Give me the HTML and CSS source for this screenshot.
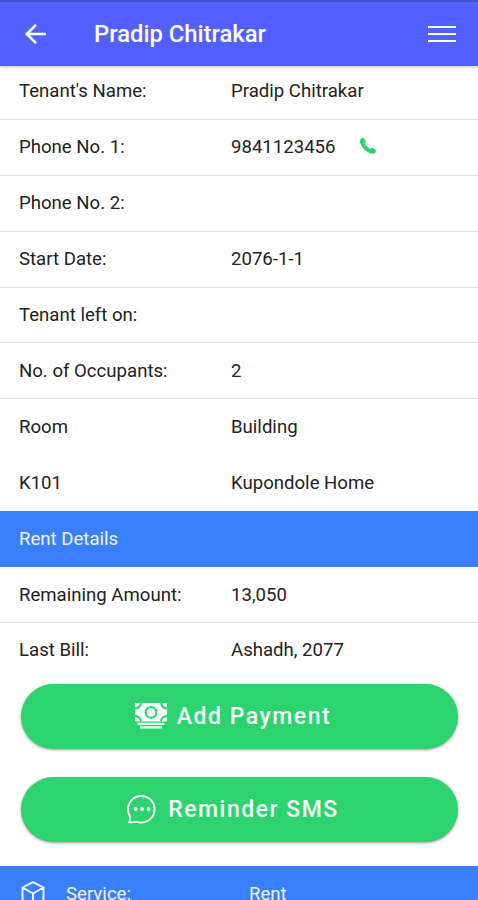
FILE: index.html
```html
<!DOCTYPE html>
<html lang="en">

<head>
    <meta charset="UTF-8">
    <meta name="viewport" content="width=device-width, initial-scale=1.0">
    <title>Tenant Details</title>
    <link rel="stylesheet" href="styles.css">
</head>

<body>

    <div class="header">
        <svg class="back" viewBox="0 0 24 24">
            <path d="M22 12H3M12 2.8L2.8 12l9.2 9.2" />
        </svg>
        <h1>Pradip Chitrakar</h1>
        <div class="menu">
            <span></span>
            <span></span>
            <span></span>
        </div>
    </div>

    <!-- tenant info -->
    <ul class="list first">
        <li><span class="label">Tenant's Name:</span><span>Pradip Chitrakar</span></li>
        <li>
            <span class="label">Phone No. 1:</span><span>9841123456</span>
            <svg class="phone" viewBox="0 0 18 18">
                <path d="M1.6 2.1C2.6.9 4.2.3 4.9 1.3L6.6 4.1C7.1 5.1 6.1 5.8 5.7 6.6C6.8 9 8.7 10.7 11 11.7C12 11.1 12.7 10.4 13.7 11L16.4 12.7C17.5 13.5 16.9 14.9 15.6 16C14.7 16.8 13.1 17 11.3 16.3C6.7 14.5 3 10.6 1.3 6.3C.7 4.6.7 3.2 1.6 2.1z" />
            </svg>
        </li>
        <li><span class="label">Phone No. 2:</span></li>
        <li><span class="label">Start Date:</span><span>2076-1-1</span></li>
        <li><span class="label">Tenant left on:</span></li>
        <li><span class="label">No. of Occupants:</span><span>2</span></li>
        <li class="noline"><span class="label">Room</span><span>Building</span></li>
        <li class="noline"><span class="label">K101</span><span>Kupondole Home</span></li>
    </ul>

    <!-- rent -->
    <div class="bar">Rent Details</div>
    <ul class="list">
        <li><span class="label">Remaining Amount:</span><span>13,050</span></li>
        <li class="noline"><span class="label">Last Bill:</span><span>Ashadh, 2077</span></li>
    </ul>

    <div class="buttons">
        <button class="btn" type="button">
            <svg class="cash" viewBox="0 0 32 26">
                <rect class="fill" width="32" height="18.5" rx="1" />
                <path class="cut" d="M0 5.4Q5.2 5 6 0M32 5.4Q26.800 5 26 0M0 13.1Q5.200 13.500 6 18.500M32 13.1Q26.800 13.500 26 18.500" />
                <circle class="cut" cx="16" cy="9.3" r="5.4" />
                <path class="line" d="M2.5 20.800h27M5 24.300h22" />
            </svg>
            <span>Add Payment</span>
        </button>
        <button class="btn" type="button">
            <svg class="chat" viewBox="0 0 30 30">
                <path d="M2.2 28.2C3.6 25.8 3.3 23.8 2.5 21.5A13.3 13.3 0 1 1 9.5 27.7C7 28.7 4.8 28.5 2.2 28.2z" />
                <circle cx="8.6" cy="15" r="1.9" />
                <circle cx="15" cy="15" r="1.9" />
                <circle cx="21.4" cy="15" r="1.9" />
            </svg>
            <span>Reminder SMS</span>
        </button>
    </div>

    <div class="bar service">
        <svg class="cube" viewBox="0 0 24 26">
            <path d="M12 1.2L22.5 6.5V19L12 24.8L1.5 19V6.5zM1.5 6.5L12 12.5L22.5 6.5M12 12.5V24.8" />
        </svg>
        <span class="service-label">Service:</span>
        <span>Rent</span>
    </div>

</body>

</html>
```
FILE: styles.css
```css
* {
    margin: 0;
    padding: 0;
    box-sizing: border-box;
}

body {
    height: 900px;
    overflow: hidden;
    background: #fff;
    color: #222;
    font-family: Roboto, sans-serif;
    font-size: 18.6px;
}

ul {
    list-style: none;
}

svg {
    display: block;
    fill: none;
    flex-shrink: 0;
}

.header {
    position: relative;
    display: flex;
    align-items: center;
    height: 66px;
    padding: 0 22px 0 24px;
    border-top: 2px solid #474fcd;
    background: #5260ff;
    color: #fff;
    box-shadow: 0 1px 3px rgba(0, 0, 0, .25);
}

.header h1 {
    flex: 1;
    margin-left: 46px;
    font-size: 23.8px;
    font-weight: 500;
    line-height: 28px;
}

.back {
    width: 24px;
    height: 24px;
    stroke: #fff;
    stroke-width: 2.6;
}

.menu {
    display: flex;
    flex-direction: column;
    gap: 4.5px;
    width: 28px;
}

.menu span {
    height: 2.5px;
    background: #fff;
}

.list li {
    display: flex;
    align-items: center;
    height: 55.9px;
    padding-left: 19px;
    border-bottom: 1px solid #dedede;
}

.list .noline {
    border-bottom-color: transparent;
}

.list.first {
    margin-top: -2px;
}

.label {
    width: 212px;
}

.phone {
    width: 18px;
    height: 18px;
    margin: -3px 0 0 23px;
    fill: #2dd36f;
}

.bar {
    display: flex;
    align-items: center;
    height: 56px;
    padding-left: 19px;
    background: #3880ff;
    color: #f1f5ff;
}

.buttons {
    display: flex;
    flex-direction: column;
    gap: 28px;
    padding: 5px 20px 24px 21px;
}

.btn {
    display: flex;
    align-items: center;
    justify-content: center;
    height: 65px;
    padding-right: 13px;
    border: none;
    border-radius: 33px;
    background: #2dd36f;
    color: #f4fff8;
    font-family: inherit;
    font-size: 23px;
    font-weight: 500;
    letter-spacing: 1.5px;
    box-shadow: 0 1px 3px rgba(0, 0, 0, .4);
}

.cash {
    width: 32px;
    height: 26px;
    margin-right: 10px;
}

.cash .fill {
    fill: #f4fff8;
}

.cash .cut {
    stroke: #2dd36f;
    stroke-width: 2;
}

.cash .line {
    stroke: #f4fff8;
    stroke-width: 2.2;
}

.chat {
    width: 30px;
    height: 30px;
    margin-right: 11px;
}

.chat path {
    stroke: #f4fff8;
    stroke-width: 1.9;
}

.chat circle {
    fill: #f4fff8;
}

.cube {
    width: 24px;
    height: 26px;
    margin-right: 21px;
    stroke: #f1f5ff;
    stroke-width: 1.9;
    stroke-linejoin: round;
}

.service {
    padding-left: 21px;
}

.service-label {
    width: 183px;
}
```
